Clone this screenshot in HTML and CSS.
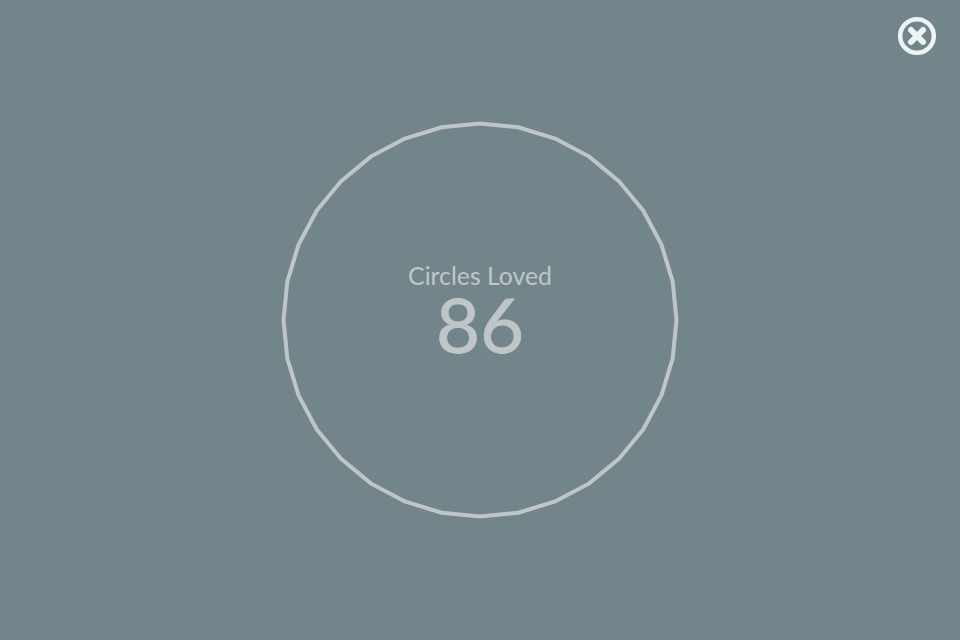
FILE: index.html
```html
<!DOCTYPE html>
<html lang="en">
<head>
    <meta charset="UTF-8">
    <title>Circles Loved</title>
    <link rel="stylesheet" href="styles.css">
</head>
<body>
    <button class="close" aria-label="Close">
        <svg width="40" height="40" viewBox="0 0 40 40">
            <circle class="close-ring" cx="20" cy="20" r="16.8"/>
            <path class="close-x" d="M14 14L26 26M26 14L14 26"/>
        </svg>
    </button>

    <main class="stage">
        <!-- the ring is a 32 sided polygon, not a true circle -->
        <svg class="ring" width="400" height="400" viewBox="-200 -200 400 400">
            <polygon points="0,-196.5 38.3,-192.7 75.2,-181.5 109.2,-163.4 138.9,-138.9 163.4,-109.2 181.5,-75.2 192.7,-38.3 196.5,0 192.7,38.3 181.5,75.2 163.4,109.2 138.9,138.9 109.2,163.4 75.2,181.5 38.3,192.7 0,196.5 -38.3,192.7 -75.2,181.5 -109.2,163.4 -138.9,138.9 -163.4,109.2 -181.5,75.2 -192.7,38.3 -196.5,0 -192.7,-38.3 -181.5,-75.2 -163.4,-109.2 -138.9,-138.9 -109.2,-163.4 -75.2,-181.5 -38.3,-192.7"/>
        </svg>
        <div class="score">
            <div class="score-label">Circles Loved</div>
            <div class="score-value">86</div>
        </div>
    </main>
</body>
</html>
```

FILE: styles.css
```css
html, body {
    height: 100%;
}

body {
    margin: 0;
    background-color: #72858b;
    font-family: Lato, "Open Sans", sans-serif;
    overflow: hidden;
}

.close {
    position: absolute;
    top: 16px;
    right: 23px;
    width: 40px;
    height: 40px;
    padding: 0;
    background: none;
    border: 0;
    cursor: pointer;
}

.close svg {
    display: block;
}

.close-ring {
    fill: none;
    stroke: #eef3f3;
    stroke-width: 4.5;
}

.close-x {
    fill: none;
    stroke: #eef3f3;
    stroke-width: 6;
    stroke-linecap: round;
}

.stage {
    height: 100%;
    display: grid;
    place-items: center;
}

.ring,
.score {
    grid-area: 1 / 1;
}

.ring polygon {
    fill: none;
    stroke: #c0c6c8;
    stroke-width: 4;
}

.score {
    color: #c0c6c8;
    text-align: center;
    margin-bottom: 20px;
}

.score-label {
    font-size: 24.8px;
    line-height: 28px;
}

.score-value {
    font-size: 76px;
    line-height: 68px;
    -webkit-text-stroke: 0.8px #c0c6c8;
}
```
